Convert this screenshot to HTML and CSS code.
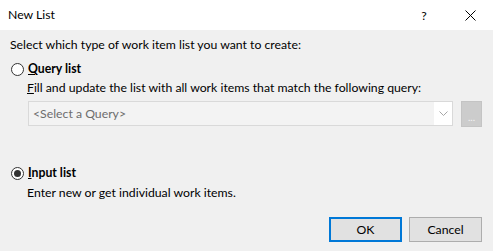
FILE: index.html
```html
<!DOCTYPE html>
<html lang="en">
<head>
    <meta charset="UTF-8">
    <title>New List</title>
    <link rel="stylesheet" href="styles.css">
</head>
<body>
    <div class="dialog">
        <!-- Title bar -->
        <div class="titlebar">
            <span class="title">New List</span>
            <div class="window-buttons">
                <span class="win-btn help">?</span>
                <span class="win-btn close">
                    <svg width="11" height="11" viewBox="0 0 11 11">
                        <path d="M0.5 0.5 L10.5 10.5 M10.5 0.5 L0.5 10.5" stroke="#000" stroke-width="1" fill="none"/>
                    </svg>
                </span>
            </div>
        </div>

        <div class="content">
            <div class="intro">Select which type of work item list you want to create:</div>

            <!-- Query list option -->
            <label class="option">
                <span class="radio"></span>
                <span class="option-label"><u>Q</u>uery list</span>
            </label>
            <div class="desc"><u>F</u>ill and update the list with all work items that match the following query:</div>
            <div class="query-row">
                <div class="combo">
                    <span class="combo-text">&lt;Select a Query&gt;</span>
                    <span class="combo-arrow">
                        <svg width="9" height="5" viewBox="0 0 9 5">
                            <path d="M0.5 0.5 L4.5 4.5 L8.5 0.5" stroke="#a6a6a6" stroke-width="1" fill="none"/>
                        </svg>
                    </span>
                </div>
                <div class="browse">...</div>
            </div>

            <!-- Input list option -->
            <label class="option option-input">
                <span class="radio checked"></span>
                <span class="option-label"><u>I</u>nput list</span>
            </label>
            <div class="desc desc-input">Enter new or get individual work items.</div>

            <div class="actions">
                <button class="btn btn-default">OK</button>
                <button class="btn">Cancel</button>
            </div>
        </div>
    </div>
</body>
</html>
```

FILE: styles.css
```css
body {
    margin: 0;
    font-family: 'Lato', sans-serif;
    font-size: 12.25px;
    color: #000;
    background-color: #f0f0f0;
}
.dialog {
    width: 493px;
    height: 251px;
    background: #f0f0f0;
}
.titlebar {
    height: 30px;
    background: #fff;
    display: flex;
    align-items: center;
    justify-content: space-between;
}
.title {
    padding-left: 8px;
    line-height: 16px;
}
.window-buttons {
    display: flex;
    height: 30px;
}
.win-btn {
    width: 46px;
    display: flex;
    align-items: center;
    justify-content: center;
}
.help {
    padding-left: 5px;
}
.close {
    width: 46px;
}
.content {
    padding: 7px 11px 0 10px;
}
.intro {
    line-height: 16px;
}
.option {
    display: flex;
    align-items: center;
    margin-top: 8px;
    line-height: 16px;
}
.radio {
    width: 11px;
    height: 11px;
    border: 1px solid #333;
    border-radius: 50%;
    background: #fff;
    margin-left: 1px;
    margin-right: 4px;
    position: relative;
}
.radio.checked::after {
    content: "";
    position: absolute;
    left: 2px;
    top: 2px;
    width: 7px;
    height: 7px;
    border-radius: 50%;
    background: #333;
}
.option-label {
    font-weight: bold;
}
.desc {
    margin-top: 3px;
    padding-left: 17px;
    line-height: 16px;
}
.query-row {
    display: flex;
    align-items: flex-start;
    margin-top: 5px;
    margin-left: 18px;
}
.combo {
    width: 423px;
    height: 23px;
    border: 1px solid #d9d9d9;
    background: #f3f3f3;
    display: flex;
    align-items: center;
    justify-content: space-between;
    box-sizing: content-box;
}
.combo-text {
    color: #6d6d6d;
    padding-left: 4px;
}
.combo-arrow {
    width: 18px;
    height: 23px;
    background: #fff;
    display: flex;
    align-items: center;
    justify-content: center;
}
.browse {
    width: 19px;
    height: 24px;
    margin-left: 8px;
    background: #cccccc;
    border: 1px solid #c4c4c4;
    color: #f4f4f4;
    font-size: 10px;
    text-align: center;
    line-height: 30px;
}
.option-input {
    margin-top: 38px;
}
.desc-input {
    margin-top: 4px;
}
.actions {
    display: flex;
    justify-content: flex-end;
    gap: 7px;
    margin-top: 16px;
}
.btn {
    width: 73px;
    height: 25px;
    background: #e1e1e1;
    border: 1px solid #adadad;
    font-family: 'Lato', sans-serif;
    font-size: 12.25px;
    color: #000;
    padding: 0;
}
.btn-default {
    border: 2px solid #0078d7;
}
```
